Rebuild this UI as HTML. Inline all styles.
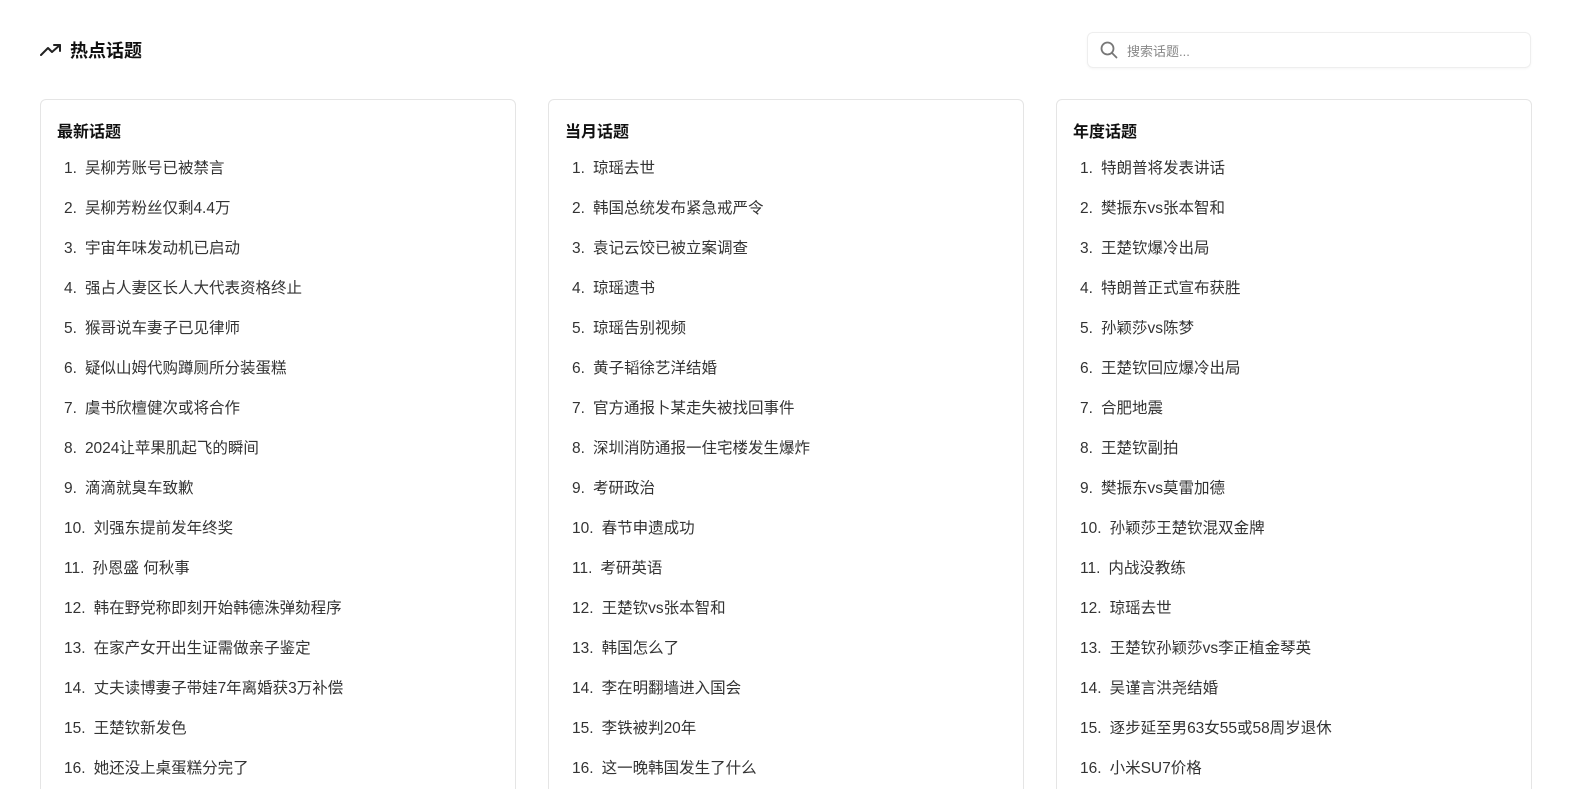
<!DOCTYPE html>
<html><head><meta charset="utf-8"><style>
*{margin:0;padding:0;box-sizing:border-box}
html,body{width:1581px;height:789px;overflow:hidden}
body{background:#fff;font-family:"Liberation Sans","Noto Sans CJK SC",sans-serif;color:#222;position:relative}
.hdr{position:absolute;left:40px;top:36px;height:28px;display:flex;align-items:center}
.hdr h1{font-size:18px;font-weight:bold;margin-left:8px;color:#111}
.search{position:absolute;left:1087px;top:32px;width:444px;height:36px;border:1px solid #eee;border-radius:6px;box-shadow:0 1px 2px rgba(0,0,0,.04);display:flex;align-items:center;padding-left:12px;font-size:13px;color:#888}
.search svg{margin-right:9px}
.card{position:absolute;top:99px;width:476px;height:720px;border:1px solid #e5e5e5;border-radius:6px}
.card h2{position:absolute;left:16px;top:18px;font-size:16px;font-weight:bold;color:#111}
.card ol{list-style:none;position:absolute;left:23px;top:58px}
.card li{height:40px;line-height:22px;font-size:15.5px;color:#333;white-space:nowrap}
.card li span{margin-right:8px}
</style></head><body>
<div class="hdr"><svg width="22" height="14" viewBox="0 0 22 14" fill="none" stroke="#222" stroke-width="2" stroke-linecap="round" stroke-linejoin="round"><path d="M1 12 L8 5 L12 9 L20 2"/><path d="M14 2 H20 V8"/></svg><h1>热点话题</h1></div>
<div class="search"><svg width="18" height="18" viewBox="0 0 18 18" fill="none" stroke="#777" stroke-width="1.8" stroke-linecap="round"><circle cx="7.5" cy="7.5" r="6"/><path d="M12 12 L16.5 16.5"/></svg>搜索话题...</div>

<div class="card" style="left:40px"><h2>最新话题</h2><ol>
<li><span>1.</span>吴柳芳账号已被禁言</li><li><span>2.</span>吴柳芳粉丝仅剩4.4万</li><li><span>3.</span>宇宙年味发动机已启动</li><li><span>4.</span>强占人妻区长人大代表资格终止</li><li><span>5.</span>猴哥说车妻子已见律师</li><li><span>6.</span>疑似山姆代购蹲厕所分装蛋糕</li><li><span>7.</span>虞书欣檀健次或将合作</li><li><span>8.</span>2024让苹果肌起飞的瞬间</li><li><span>9.</span>滴滴就臭车致歉</li><li><span>10.</span>刘强东提前发年终奖</li><li><span>11.</span>孙恩盛 何秋事</li><li><span>12.</span>韩在野党称即刻开始韩德洙弹劾程序</li><li><span>13.</span>在家产女开出生证需做亲子鉴定</li><li><span>14.</span>丈夫读博妻子带娃7年离婚获3万补偿</li><li><span>15.</span>王楚钦新发色</li><li><span>16.</span>她还没上桌蛋糕分完了</li></ol></div>

<div class="card" style="left:548px"><h2>当月话题</h2><ol>
<li><span>1.</span>琼瑶去世</li><li><span>2.</span>韩国总统发布紧急戒严令</li><li><span>3.</span>袁记云饺已被立案调查</li><li><span>4.</span>琼瑶遗书</li><li><span>5.</span>琼瑶告别视频</li><li><span>6.</span>黄子韬徐艺洋结婚</li><li><span>7.</span>官方通报卜某走失被找回事件</li><li><span>8.</span>深圳消防通报一住宅楼发生爆炸</li><li><span>9.</span>考研政治</li><li><span>10.</span>春节申遗成功</li><li><span>11.</span>考研英语</li><li><span>12.</span>王楚钦vs张本智和</li><li><span>13.</span>韩国怎么了</li><li><span>14.</span>李在明翻墙进入国会</li><li><span>15.</span>李铁被判20年</li><li><span>16.</span>这一晚韩国发生了什么</li></ol></div>

<div class="card" style="left:1056px"><h2>年度话题</h2><ol>
<li><span>1.</span>特朗普将发表讲话</li><li><span>2.</span>樊振东vs张本智和</li><li><span>3.</span>王楚钦爆冷出局</li><li><span>4.</span>特朗普正式宣布获胜</li><li><span>5.</span>孙颖莎vs陈梦</li><li><span>6.</span>王楚钦回应爆冷出局</li><li><span>7.</span>合肥地震</li><li><span>8.</span>王楚钦副拍</li><li><span>9.</span>樊振东vs莫雷加德</li><li><span>10.</span>孙颖莎王楚钦混双金牌</li><li><span>11.</span>内战没教练</li><li><span>12.</span>琼瑶去世</li><li><span>13.</span>王楚钦孙颖莎vs李正植金琴英</li><li><span>14.</span>吴谨言洪尧结婚</li><li><span>15.</span>逐步延至男63女55或58周岁退休</li><li><span>16.</span>小米SU7价格</li></ol></div>
</body></html>
